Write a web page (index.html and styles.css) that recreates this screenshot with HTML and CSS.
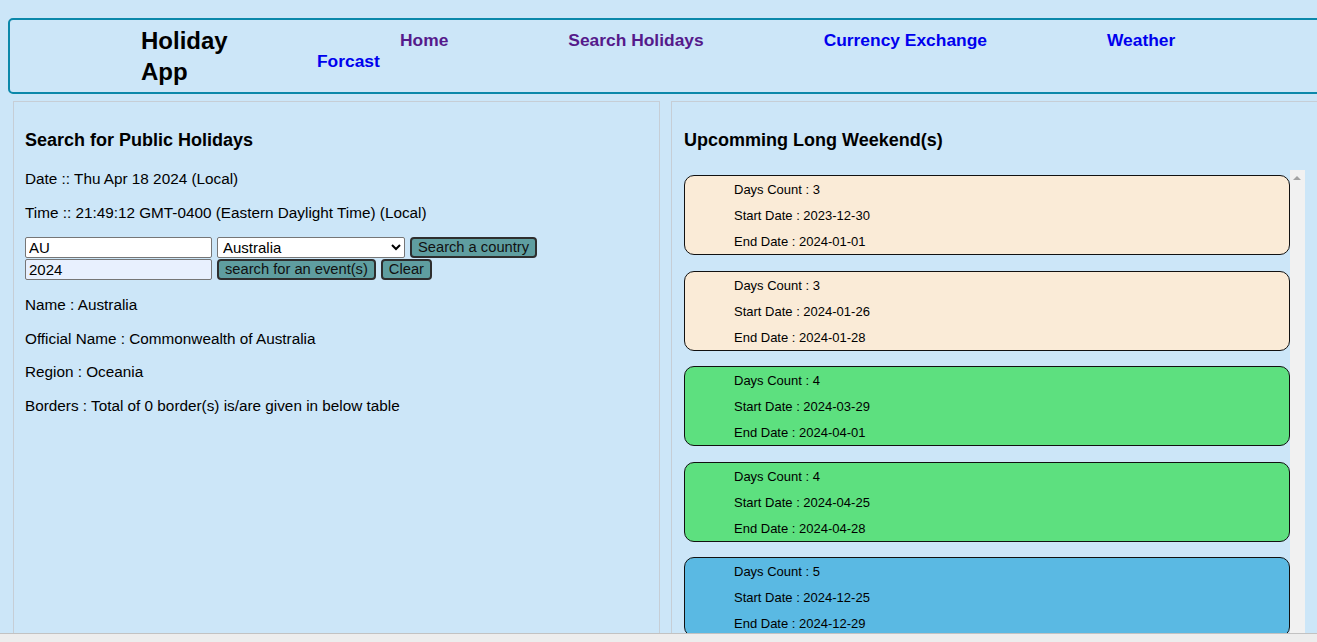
FILE: index.html
```html
<!DOCTYPE html>
<html lang="en">
<head>
<meta charset="utf-8">
<title>Holiday App</title>
<link rel="stylesheet" href="styles.css">
</head>
<body>
<div class="page">
<header class="topbar">
  <div class="brand">Holiday App</div>
  <nav class="nav"><a class="visited" href="#">Home</a><a class="visited" href="#">Search Holidays</a><a href="#">Currency Exchange</a><a href="#">Weather Forcast</a></nav>
</header>
<main class="panels">
  <section class="panel">
    <h3 class="panel-title">Search for Public Holidays</h3>
    <p class="line">Date :: Thu Apr 18 2024 (Local)</p>
    <p class="line">Time :: 21:49:12 GMT-0400 (Eastern Daylight Time) (Local)</p>
    <form class="search">
      <div class="row">
        <input class="field" type="text" value="AU">
        <select class="field select"><option>Australia</option></select>
        <button type="button" class="btn">Search a country</button>
      </div>
      <div class="row">
        <input class="field autofill" type="text" value="2024">
        <button type="button" class="btn btn-event">search for an event(s)</button>
        <button type="button" class="btn">Clear</button>
      </div>
    </form>
    <p class="line">Name : Australia</p>
    <p class="line">Official Name : Commonwealth of Australia</p>
    <p class="line">Region : Oceania</p>
    <p class="line">Borders : Total of 0 border(s) is/are given in below table</p>
  </section>
  <section class="panel panel-right">
    <h3 class="panel-title">Upcomming Long Weekend(s)</h3>
    <div class="list-wrap">
      <div class="list">
        <div class="card short">
          <div>Days Count : 3</div>
          <div>Start Date : 2023-12-30</div>
          <div>End Date : 2024-01-01</div>
        </div>
        <div class="card short">
          <div>Days Count : 3</div>
          <div>Start Date : 2024-01-26</div>
          <div>End Date : 2024-01-28</div>
        </div>
        <div class="card medium">
          <div>Days Count : 4</div>
          <div>Start Date : 2024-03-29</div>
          <div>End Date : 2024-04-01</div>
        </div>
        <div class="card medium">
          <div>Days Count : 4</div>
          <div>Start Date : 2024-04-25</div>
          <div>End Date : 2024-04-28</div>
        </div>
        <div class="card long">
          <div>Days Count : 5</div>
          <div>Start Date : 2024-12-25</div>
          <div>End Date : 2024-12-29</div>
        </div>
      </div>
      <div class="track"></div>
    </div>
  </section>
</main>
</div>
<div class="hscroll"></div>
</body>
</html>
```
FILE: styles.css
```css
html {
  overflow: hidden;
  background: #cce6f8;
}
body {
  margin: 0;
  width: 1317px;
  height: 642px;
  overflow: hidden;
  font-family: "Liberation Sans", Arial, sans-serif;
  color: #000;
  background: #cce6f8;
}
.page {
  padding: 8px 0 0 8px;
  width: 1420px;
}
.topbar {
  margin-top: 10px;
  width: 1400px;
  height: 76px;
  box-sizing: border-box;
  border: 2px solid #0b88aa;
  border-radius: 5px;
  padding: 5px 0 5px 131px;
  display: flex;
  align-items: flex-start;
}
.brand {
  flex: none;
  width: 176px;
  box-sizing: border-box;
  padding-right: 76px;
  font-size: 24px;
  font-weight: bold;
  line-height: 31px;
}
.nav {
  flex: none;
  width: 895px;
  margin-top: 5px;
  text-indent: 83px;
  font-size: 17.4px;
  font-weight: bold;
  line-height: 21px;
}
.nav a {
  color: #0000ee;
  text-decoration: none;
}
.nav a.visited {
  color: #551a8b;
}
.nav a + a {
  margin-left: 120px;
}
.panels {
  display: flex;
  gap: 11px;
  margin-top: 7px;
  padding-left: 5px;
}
.panel {
  flex: none;
  width: 647px;
  min-height: 600px;
  box-sizing: border-box;
  border: 1px solid #c6ced6;
  padding: 27px 12px 0 11px;
}
.panel-right {
  width: 700px;
  padding-left: 12px;
  padding-right: 65px;
}
.panel-title {
  margin: 0 0 19px;
  font-size: 18px;
  line-height: 22px;
  font-weight: bold;
}
.line {
  margin: 16px 0;
  font-size: 15.3px;
  line-height: 17.5px;
}
.search {
  display: flex;
  flex-direction: column;
  gap: 1px;
}
.row {
  display: flex;
  gap: 5px;
  height: 21px;
}
.field {
  box-sizing: border-box;
  width: 187px;
  height: 21px;
  margin: 0;
  border: 1px solid #767676;
  border-radius: 2px;
  background: #fff;
  padding: 0 3px;
  font-family: "Liberation Sans", Arial, sans-serif;
  font-size: 15px;
  color: #000;
}
.select {
  width: 188px;
  padding: 0 1px;
}
.autofill {
  background: #e8f0fe;
}
.btn {
  box-sizing: border-box;
  height: 21px;
  margin: 0;
  padding: 0 6px;
  background: #5f9ea0;
  border: 2px solid #2e2e2e;
  border-radius: 4px;
  font-family: "Liberation Sans", Arial, sans-serif;
  font-size: 14.7px;
  line-height: 17px;
  color: #111;
}
.list-wrap {
  display: flex;
  height: 480px;
}
.list {
  flex: 1;
  padding-top: 5px;
  display: flex;
  flex-direction: column;
  gap: 15.5px;
}
.track {
  flex: none;
  width: 15px;
  background: #f1f1f1;
  position: relative;
}
.track::before {
  content: "";
  position: absolute;
  top: 6px;
  left: 3px;
  border-left: 4.5px solid transparent;
  border-right: 4.5px solid transparent;
  border-bottom: 4.5px solid #a3a3a3;
}
.card {
  flex: none;
  height: 80px;
  box-sizing: border-box;
  border: 1px solid #111;
  border-radius: 10px;
  padding: 1px 0 0 49px;
  font-size: 13px;
  line-height: 26px;
}
.short {
  background: #faebd7;
}
.medium {
  background: #5de07f;
}
.long {
  background: #5ab9e3;
}
.hscroll {
  position: fixed;
  left: 0;
  right: 0;
  bottom: 0;
  height: 8px;
  background: #ededed;
  border-top: 1px solid #c2c2c2;
}
```
